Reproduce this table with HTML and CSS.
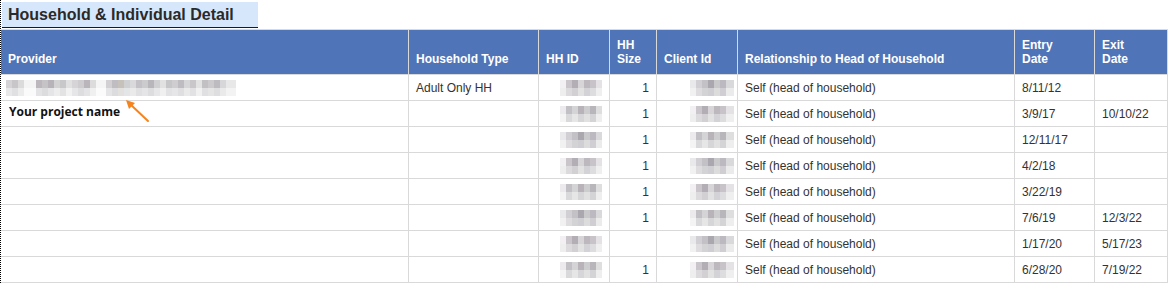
FILE: index.html
```html
<!DOCTYPE html>
<html lang="en">
<head>
<meta charset="utf-8">
<title>Household &amp; Individual Detail</title>
<link rel="stylesheet" href="styles.css">
</head>
<body>
<div class="sheet">
  <div class="title">Household &amp; Individual Detail</div>
  <table class="detail">
    <thead>
      <tr>
        <th class="c-provider">Provider</th>
        <th class="c-type">Household Type</th>
        <th class="c-hhid">HH ID</th>
        <th class="c-size">HH<br>Size</th>
        <th class="c-client">Client Id</th>
        <th class="c-rel">Relationship to Head of Household</th>
        <th class="c-entry">Entry<br>Date</th>
        <th class="c-exit">Exit<br>Date</th>
      </tr>
    </thead>
    <tbody>
      <tr>
        <td><span class="mosaic mosaic-long"></span></td>
        <td>Adult Only HH</td>
        <td class="num"><span class="mosaic m1"></span></td>
        <td class="num">1</td>
        <td class="num"><span class="mosaic m2 mc"></span></td>
        <td>Self (head of household)</td>
        <td>8/11/12</td>
        <td></td>
      </tr>
      <tr>
        <td class="annot-cell"><span class="annot">Your project name</span></td>
        <td></td>
        <td class="num"><span class="mosaic m3"></span></td>
        <td class="num">1</td>
        <td class="num"><span class="mosaic m1 mc"></span></td>
        <td>Self (head of household)</td>
        <td>3/9/17</td>
        <td>10/10/22</td>
      </tr>
      <tr>
        <td></td><td></td>
        <td class="num"><span class="mosaic m2"></span></td>
        <td class="num">1</td>
        <td class="num"><span class="mosaic m3 mc"></span></td>
        <td>Self (head of household)</td>
        <td>12/11/17</td>
        <td></td>
      </tr>
      <tr>
        <td></td><td></td>
        <td class="num"><span class="mosaic m1"></span></td>
        <td class="num">1</td>
        <td class="num"><span class="mosaic m2 mc"></span></td>
        <td>Self (head of household)</td>
        <td>4/2/18</td>
        <td></td>
      </tr>
      <tr>
        <td></td><td></td>
        <td class="num"><span class="mosaic m3"></span></td>
        <td class="num">1</td>
        <td class="num"><span class="mosaic m1 mc"></span></td>
        <td>Self (head of household)</td>
        <td>3/22/19</td>
        <td></td>
      </tr>
      <tr>
        <td></td><td></td>
        <td class="num"><span class="mosaic m2"></span></td>
        <td class="num">1</td>
        <td class="num"><span class="mosaic m3 mc"></span></td>
        <td>Self (head of household)</td>
        <td>7/6/19</td>
        <td>12/3/22</td>
      </tr>
      <tr>
        <td></td><td></td>
        <td class="num"><span class="mosaic m1"></span></td>
        <td class="num"></td>
        <td class="num"><span class="mosaic m2 mc"></span></td>
        <td>Self (head of household)</td>
        <td>1/17/20</td>
        <td>5/17/23</td>
      </tr>
      <tr>
        <td></td><td></td>
        <td class="num"><span class="mosaic m3"></span></td>
        <td class="num">1</td>
        <td class="num"><span class="mosaic m1 mc"></span></td>
        <td>Self (head of household)</td>
        <td>6/28/20</td>
        <td>7/19/22</td>
      </tr>
    </tbody>
  </table>
  <svg class="arrow" width="32" height="28" viewBox="0 0 32 28" aria-hidden="true">
    <line x1="27" y1="24" x2="9" y2="7" stroke="#f5841f" stroke-width="2" stroke-linecap="round"/>
    <polygon points="5,3 14,6 8,12" fill="#f5841f"/>
  </svg>
</div>
</body>
</html>
```

FILE: styles.css
```css
* { box-sizing: border-box; }

html, body {
  margin: 0;
  padding: 0;
  background: #ffffff;
}

body {
  font-family: "Liberation Sans", Arial, sans-serif;
  color: #333333;
}

.sheet {
  position: relative;
  height: 283px;
  border-left: 1px dotted #000000;
  overflow: hidden;
}

.title {
  margin: 2px 0 1px 1px;
  width: 256px;
  height: 26px;
  padding: 3px 0 0 6px;
  background: #d6e7fb;
  border-bottom: 1px solid #1a1a1a;
  font-size: 16px;
  font-weight: bold;
  line-height: 20px;
  color: #2a2a2a;
}

.detail {
  width: 1167px;
  table-layout: fixed;
  border-collapse: separate;
  border-spacing: 0;
  border-top: 1px solid #d9d9d9;
  font-size: 12px;
}

.detail th,
.detail td {
  border-right: 1px solid #d9d9d9;
  border-bottom: 1px solid #d9d9d9;
  text-align: left;
  white-space: nowrap;
  overflow: hidden;
}

.detail th {
  height: 45px;
  padding: 0 7px 8px 7px;
  background: #4f74b8;
  color: #ffffff;
  font-weight: bold;
  vertical-align: bottom;
  line-height: 13.5px;
}

.detail td {
  height: 26px;
  padding: 0 7px;
  vertical-align: middle;
  line-height: 14px;
  color: #333333;
}

.detail td.num { text-align: right; }

.c-provider { width: 408px; }
.c-type { width: 130px; }
.c-hhid { width: 71px; }
.c-size { width: 47px; }
.c-client { width: 81px; }
.c-rel { width: 277px; }
.c-entry { width: 80px; }
.c-exit { width: 73px; }

/* pixelated redaction blocks */
.mosaic {
  display: inline-block;
  vertical-align: middle;
  height: 16px;
  background-repeat: no-repeat;
  background-size: 100% 8px, 100% 8px;
  background-position: 0 0, 0 8px;
}

.m1, .m2, .m3 { width: 42px; }
.mc { margin-right: -4px; width: 44px; }

.m1 {
  background-image:
    linear-gradient(90deg, #f2f0f2 0 6px, #c9c5cb 6px 12px, #b3aeb6 12px 18px, #d7d5d7 18px 24px, #bdb8be 24px 30px, #c7c3c8 30px 36px, #e4e2e5 36px 100%),
    linear-gradient(90deg, #eeeeee 0 6px, #dcdadd 6px 12px, #d2d0d3 12px 18px, #e2e2e3 18px 24px, #d3d2d6 24px 30px, #dddcdf 30px 36px, #efefef 36px 100%);
}

.m2 {
  background-image:
    linear-gradient(90deg, #e9e8ea 0 6px, #d1cfd3 6px 12px, #c4c1c6 12px 18px, #aba7ae 18px 24px, #c9c9cb 24px 30px, #bcbac0 30px 36px, #d9d8da 36px 100%),
    linear-gradient(90deg, #f1f1f1 0 6px, #dedcdf 6px 12px, #d3d3d5 12px 18px, #cfcfd3 18px 24px, #dcdcdc 24px 30px, #d0ced3 30px 36px, #ebebeb 36px 100%);
}

.m3 {
  background-image:
    linear-gradient(90deg, #eceaec 0 6px, #c3c0c5 6px 12px, #d4d4d6 12px 18px, #b7b3b9 18px 24px, #cdcdcf 24px 30px, #b8b5bb 30px 36px, #dedede 36px 100%),
    linear-gradient(90deg, #f4f4f4 0 6px, #d9d8da 6px 12px, #e6e6e7 12px 18px, #d6d5d8 18px 24px, #e1e1e2 24px 30px, #d4d3d6 30px 36px, #eeeeee 36px 100%);
}

.mosaic-long {
  width: 230px;
  margin-left: -2px;
  background-image:
    linear-gradient(90deg,
      #d5d3d6 0 6px, #c9c6ca 6px 12px, #dcdbdc 12px 18px, #f4f4f4 18px 30px,
      #bcb7bd 30px 36px, #c6c3c7 36px 42px, #b8b3b9 42px 48px, #d3d3d4 48px 54px,
      #c8c8ca 54px 60px, #e1e1e1 60px 66px, #d6d4d7 66px 72px, #cfccd0 72px 78px,
      #bab5bb 78px 84px, #dcdcdc 84px 90px, #f5f5f5 90px 100px, #d2d0d3 100px 106px,
      #c0bdc2 106px 112px, #c6c2bb 112px 118px, #cfd0d1 118px 124px, #d9d8da 124px 130px,
      #c4c1c6 130px 136px, #cbcacd 136px 142px, #b9b6bb 142px 148px, #d0cfd1 148px 154px,
      #e2e1e2 154px 160px, #c6c5c8 160px 166px, #cfcdd0 166px 172px, #bfbcc1 172px 178px,
      #d6d5d7 178px 184px, #c9c7ca 184px 190px, #e3e3e3 190px 196px, #c3c0c4 196px 202px,
      #cccacc 202px 208px, #bebbc0 208px 214px, #d7d6d8 214px 220px, #e8e8e8 220px 100%),
    linear-gradient(90deg,
      #e8e8e9 0 6px, #e0dfe1 6px 12px, #ececec 12px 18px, #fafafa 18px 30px,
      #e3e2e4 30px 36px, #dcdbdd 36px 42px, #e5e4e6 42px 48px, #ededed 48px 54px,
      #e3e3e4 54px 60px, #f2f2f2 60px 66px, #e6e5e7 66px 72px, #dddcde 72px 78px,
      #e4e3e5 78px 84px, #f0f0f0 84px 90px, #fbfbfb 90px 100px, #e5e4e6 100px 106px,
      #dcdbdd 106px 112px, #e2e1df 112px 118px, #e4e5e6 118px 124px, #eaeaea 124px 130px,
      #e0dfe1 130px 136px, #e5e4e6 136px 142px, #dddcdf 142px 148px, #e7e6e8 148px 154px,
      #f0f0f0 154px 160px, #e2e1e3 160px 166px, #e6e5e7 166px 172px, #dfdee1 172px 178px,
      #ebeaeb 178px 184px, #e2e1e3 184px 190px, #f1f1f1 190px 196px, #e0dfe1 196px 202px,
      #e6e5e6 202px 208px, #dedde0 208px 214px, #eaeaea 214px 220px, #f3f3f3 220px 100%);
}

.annot-cell { position: relative; }

.annot {
  position: absolute;
  left: 8px;
  top: 3px;
  font-family: "Open Sans", "Noto Sans", sans-serif;
  font-weight: bold;
  font-size: 12px;
  line-height: 16px;
  color: #111111;
}

.arrow {
  position: absolute;
  left: 120px;
  top: 97px;
}
```
